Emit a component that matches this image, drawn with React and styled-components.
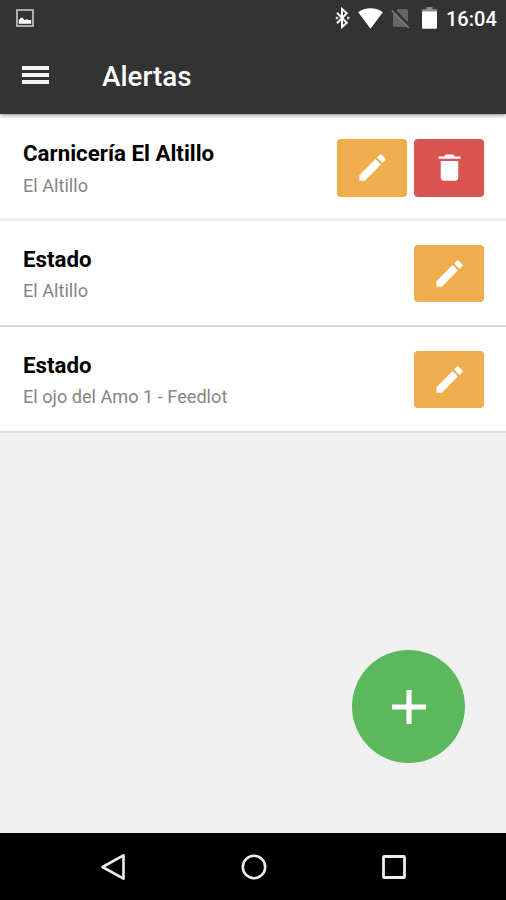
import React from 'react';
import styled, { createGlobalStyle } from 'styled-components';

const alerts = [
  { id: 1, title: 'Carnicería El Altillo', place: 'El Altillo', removable: true, border: '#f0f0f0', borderWidth: 3 },
  { id: 2, title: 'Estado', place: 'El Altillo', border: '#d8d8d8', borderWidth: 2 },
  { id: 3, title: 'Estado', place: 'El ojo del Amo 1 - Feedlot', border: '#dedede', borderWidth: 2 },
];

const ImageIcon = () => (
  <svg width='18' height='18' viewBox='0 0 18 18'>
    <rect x='1' y='1' width='16' height='16' fill='none' stroke='#c4c4c4' strokeWidth='1.7' />
    <path d='M2.800 14.800v-3.500l2-2.500h1.700l2 2.200 2.500-.8 2 1 2.200-.4v4z' fill='#fff' />
  </svg>
);

const BluetoothIcon = () => (
  <svg width='15' height='22' viewBox='0 0 15 22'>
    <path
      d='M2 5.800l9.800 10-4.800 4.200V2l4.800 4.200-9.800 10'
      fill='none'
      stroke='#fff'
      strokeWidth='2'
    />
    <path d='M.8 9.800h2.400v2.400H.8zM12 9.800h2.400v2.400H12z' fill='#ddd' />
  </svg>
);

const WifiIcon = () => (
  <svg width='25' height='21' viewBox='0 0 25 21'>
    <path d='M12.500 20.700L.2 4.300C3.500 1.600 7.700.3 12.500.3s9 1.300 12.300 4z' fill='#fff' />
  </svg>
);

const NoSimIcon = () => (
  <svg width='19' height='21' viewBox='0 0 19 21'>
    <path d='M7 1h8.500q1.500 0 1.500 1.500V19H3.500Q2 19 2 17.500V6z' fill='#666' />
    <path d='M1.500 1l17 17.500' stroke='#333' strokeWidth='3.500' />
    <path d='M.8 2.500l17 17.500' stroke='#7c7c7c' strokeWidth='1.700' />
  </svg>
);

const BatteryIcon = () => (
  <svg width='15' height='22' viewBox='0 0 15 22'>
    <path d='M4.500 0h6v2.300H15V5H0V2.300h4.500z' fill='#8f8f8f' />
    <path d='M0 4.500h15v16q0 1.200-1.200 1.200H1.200Q0 21.700 0 20.500z' fill='#fff' />
  </svg>
);

const PencilIcon = () => (
  <svg width='35' height='35' viewBox='0 0 512 512' fill='#fff'>
    <path d='M64 368v80h80l235.700-235.700-80-80zM441.600 150.400c8.500-8.500 8.500-21.300 0-29.900l-50.100-50.100c-8.500-8.500-21.300-8.500-29.900 0l-39.500 39.500 80 80z' />
  </svg>
);

const TrashIcon = () => (
  <svg width='35' height='35' viewBox='0 0 512 512' fill='#fff'>
    <path d='M128 405.400c0 23.400 19.200 42.600 42.700 42.600h170.600c23.500 0 42.700-19.200 42.700-42.600V160H128zM416 96h-80l-26.800-32H202.800L176 96H96v32h320z' />
  </svg>
);

const App = () => {
  return (
    <Screen>
      <GlobalStyle />
      <Header>
        <StatusBar>
          <ImageIcon />
          <StatusIcons>
            <BluetoothIcon />
            <WifiIcon />
            <NoSimIcon />
            <BatteryIcon />
            <Clock>16:04</Clock>
          </StatusIcons>
        </StatusBar>
        <Toolbar>
          <MenuButton aria-label='Menu'>
            <MenuLine />
            <MenuLine />
            <MenuLine />
          </MenuButton>
          <PageTitle>Alertas</PageTitle>
        </Toolbar>
      </Header>
      <Content>
        <AlertList>
          {alerts.map((alert) => (
            <AlertItem key={alert.id} $border={alert.border} $borderWidth={alert.borderWidth}>
              <AlertText>
                <AlertTitle>{alert.title}</AlertTitle>
                <AlertPlace>{alert.place}</AlertPlace>
              </AlertText>
              <ActionButton $color='#f0ad4e'>
                <PencilIcon />
              </ActionButton>
              {alert.removable && (
                <ActionButton $color='#d9534f'>
                  <TrashIcon />
                </ActionButton>
              )}
            </AlertItem>
          ))}
        </AlertList>
        <AddButton aria-label='Agregar'>
          <svg width='34' height='34' viewBox='0 0 34 34'>
            <path d='M17 0v34M0 17h34' stroke='#fff' strokeWidth='5.200' />
          </svg>
        </AddButton>
      </Content>
      <NavBar>
        <svg width='26' height='28' viewBox='0 0 26 28'>
          <path d='M2.500 14L23.500 2.300v23.400z' fill='none' stroke='#eee' strokeWidth='2.600' strokeLinejoin='round' />
        </svg>
        <svg width='26' height='26' viewBox='0 0 26 26'>
          <circle cx='13' cy='13' r='11.200' fill='none' stroke='#eee' strokeWidth='2.600' />
        </svg>
        <svg width='26' height='26' viewBox='0 0 26 26'>
          <rect x='2.500' y='2.500' width='21' height='21' rx='.8' fill='none' stroke='#eee' strokeWidth='2.800' />
        </svg>
      </NavBar>
    </Screen>
  );
};

const GlobalStyle = createGlobalStyle`
  * {
    box-sizing: border-box;
  }

  body {
    margin: 0;
    font-family: Roboto, 'Liberation Sans', sans-serif;
  }

  svg {
    display: block;
    flex-shrink: 0;
  }
`;

const Screen = styled.div`
  display: flex;
  flex-direction: column;
  width: 506px;
  height: 900px;
  overflow: hidden;
  background: #f0f0f0;
`;

const Header = styled.header`
  position: relative;
  height: 114px;
  background: #333;
  box-shadow: 0 1px 4px rgba(0, 0, 0, 0.5);
`;

const StatusBar = styled.div`
  display: flex;
  align-items: center;
  justify-content: space-between;
  height: 36px;
  padding: 0 10px 0 16px;
`;

const StatusIcons = styled.div`
  display: flex;
  align-items: center;

  svg + svg {
    margin-left: 8px;
  }

  svg:nth-of-type(4) {
    margin-left: 12px;
  }
`;

const Clock = styled.span`
  width: 50px;
  padding-top: 2px;
  margin-left: 9px;
  color: #fff;
  font-size: 20px;
  font-weight: 500;
  line-height: 36px;
`;

const Toolbar = styled.div`
  display: flex;
  align-items: center;
  height: 78px;
  padding-left: 22px;
`;

const MenuButton = styled.button`
  display: flex;
  flex-direction: column;
  gap: 3px;
  width: 27px;
  margin: 0 53px 0 0;
  padding: 0;
  border: 0;
  background: none;
`;

const MenuLine = styled.span`
  height: 4px;
  background: #f4f4f4;
`;

const PageTitle = styled.h1`
  margin: 3px 0 0;
  color: #fff;
  font-size: 27.8px;
  font-weight: 500;
  line-height: 36px;
`;

const Content = styled.main`
  display: flex;
  flex: 1;
  flex-direction: column;
  justify-content: space-between;
`;

const AlertList = styled.ul`
  margin: 0;
  padding: 1px 0 0;
  background: #fff;
  list-style: none;
`;

const AlertItem = styled.li`
  display: flex;
  align-items: flex-start;
  gap: 7px;
  height: 106px;
  padding: 24px 22px 0 23px;
  border-bottom: ${({ $borderWidth }) => $borderWidth}px solid ${({ $border }) => $border};

  & + & {
    padding-top: 23.6px;
  }
`;

const AlertText = styled.div`
  flex: 1;
`;

const AlertTitle = styled.h2`
  margin: 0;
  color: #000;
  font-size: 22.3px;
  font-weight: 700;
  line-height: 29px;
`;

const AlertPlace = styled.p`
  margin: 2.600px 0 0;
  color: #858585;
  font-size: 18.15px;
  line-height: 30px;
`;

const ActionButton = styled.button`
  display: flex;
  align-items: center;
  justify-content: center;
  width: 70px;
  height: 57.600px;
  padding: 0;
  border: 0;
  border-radius: 4px;
  background: ${({ $color }) => $color};
`;

const AddButton = styled.button`
  display: flex;
  align-items: center;
  justify-content: center;
  align-self: flex-end;
  width: 113px;
  height: 113px;
  margin: 0 41px 70px 0;
  padding: 0;
  border: 0;
  border-radius: 50%;
  background: #5cb85c;
`;

const NavBar = styled.nav`
  display: flex;
  align-items: center;
  justify-content: space-between;
  height: 67px;
  padding: 0 99px 0 100px;
  background: #000;
`;

export default App;
